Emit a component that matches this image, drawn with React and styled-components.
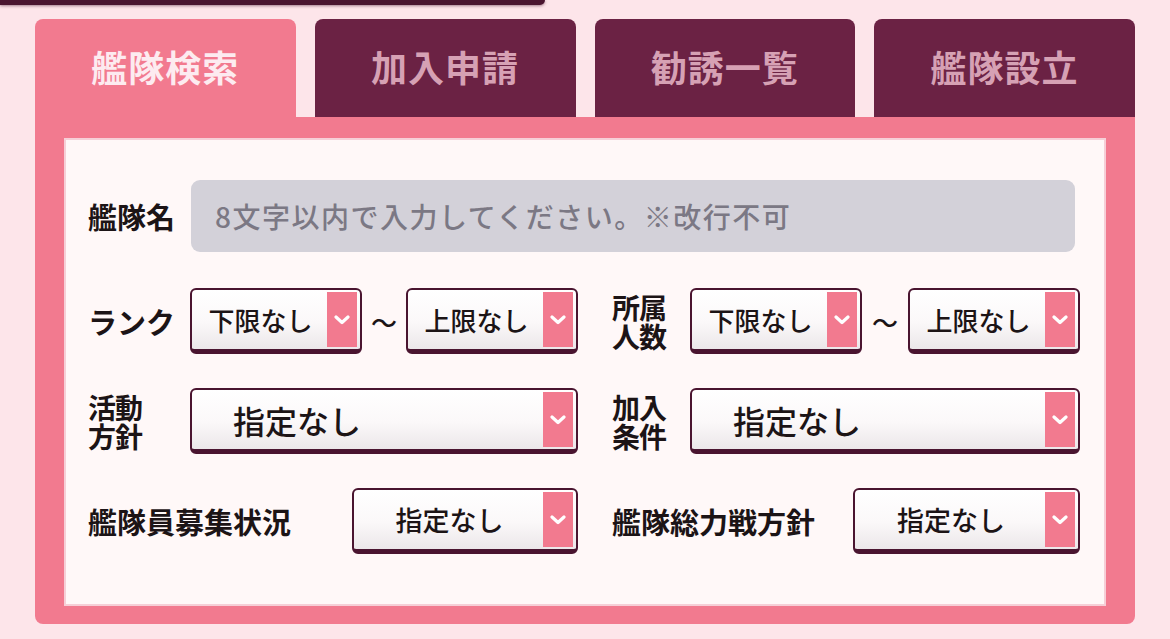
import React from "react";
import styled, { createGlobalStyle } from "styled-components";

const COLOR = {
  BG: "#fde5ea",
  PINK: "#f27a8f",
  MAROON: "#6b2244",
  DARK: "#4a1530",
  TAB_TEXT: "#d6a1b4",
  ACTIVE_TEXT: "#fdebf0",
  INNER: "#fff8f8",
  INPUT: "#d3d1d9",
  PLACEHOLDER: "#7b7884",
  TEXT: "#1c1416",
};

const FONT = `"Noto Sans CJK JP", "Noto Sans", sans-serif`;

const TABS = ["艦隊検索", "加入申請", "勧誘一覧", "艦隊設立"];

const GlobalStyle = createGlobalStyle`
  body {
    margin: 0;
    background-color: ${COLOR.BG};
    font-family: ${FONT};
  }
`;

function Chevron() {
  return (
    <svg width="16" height="10" viewBox="0 0 16 10">
      <path
        d="M2 2 L8 7.5 L14 2"
        fill="none"
        stroke="#fff"
        strokeWidth="3.2"
        strokeLinecap="round"
        strokeLinejoin="round"
      />
    </svg>
  );
}

function Select({ value, width, size, align }) {
  return (
    <SelectBox width={width}>
      <SelectText size={size} align={align}>
        {value}
      </SelectText>
      <SelectArrow>
        <Chevron />
      </SelectArrow>
    </SelectBox>
  );
}

function RangeSelect() {
  return (
    <RangeGroup>
      <Select value="下限なし" width={172} size={26} />
      <Tilde>～</Tilde>
      <Select value="上限なし" width={172} size={26} />
    </RangeGroup>
  );
}

function StackLabel({ width, top, bottom }) {
  return (
    <StackWrap width={width}>
      <StackLine>{top}</StackLine>
      <StackLine>{bottom}</StackLine>
    </StackWrap>
  );
}

export default function App() {
  return (
    <>
      <GlobalStyle />
      <TopBar />
      <Page>
        <TabRow>
          {TABS.map((tab, index) => (
            <Tab key={tab} active={index === 0}>
              {tab}
            </Tab>
          ))}
        </TabRow>
        <Panel>
          <Inner>
            <NameRow>
              <Label>艦隊名</Label>
              <NameInput placeholder="8文字以内で入力してください。※改行不可" />
            </NameRow>
            <Grid>
              <Field>
                <Label width={102}>ランク</Label>
                <RangeSelect />
              </Field>
              <Field>
                <StackLabel width={78} top="所属" bottom="人数" />
                <RangeSelect />
              </Field>

              <Field>
                <StackLabel width={102} top="活動" bottom="方針" />
                <Select value="指定なし" size={32} align="left" />
              </Field>
              <Field>
                <StackLabel width={78} top="加入" bottom="条件" />
                <Select value="指定なし" size={32} align="left" />
              </Field>

              <Field>
                <Label>艦隊員募集状況</Label>
                <Spacer />
                <Select value="指定なし" width={226} size={27} />
              </Field>
              <Field>
                <Label>艦隊総力戦方針</Label>
                <Spacer />
                <Select value="指定なし" width={227} size={27} />
              </Field>
            </Grid>
          </Inner>
        </Panel>
      </Page>
    </>
  );
}

const TopBar = styled.div`
  width: 545px;
  height: 5px;
  background-color: ${COLOR.DARK};
  border-bottom-right-radius: 6px;
  box-shadow: 0 1px 3px rgba(74, 21, 48, 0.5);
`;

const Page = styled.div`
  width: 1100px;
  margin: 14px 0 0 35px;
`;

const TabRow = styled.div`
  display: flex;
  gap: 19px;
`;

const Tab = styled.div`
  flex: 1;
  height: 98px;
  display: flex;
  justify-content: center;
  align-items: center;
  padding-bottom: 4px;
  box-sizing: border-box;
  border-radius: 8px 8px 0 0;
  font-size: 36px;
  font-weight: 700;
  letter-spacing: 1px;
  color: ${(props) => (props.active ? COLOR.ACTIVE_TEXT : COLOR.TAB_TEXT)};
  background-color: ${(props) => (props.active ? COLOR.PINK : COLOR.MAROON)};
`;

const Panel = styled.div`
  padding: 23px 31px 20px 31px;
  background-color: ${COLOR.PINK};
  border-radius: 0 0 8px 8px;
`;

const Inner = styled.div`
  display: flex;
  flex-direction: column;
  gap: 36px;
  padding: 40px 24px 50px 22px;
  background-color: ${COLOR.INNER};
  box-shadow: 0 0 0 2px #f6cfd7;
`;

const NameRow = styled.div`
  display: flex;
  align-items: center;
  gap: 16px;
  padding-right: 5px;
`;

const Label = styled.div`
  flex-shrink: 0;
  width: ${(props) => (props.width ? `${props.width}px` : "auto")};
  font-size: 29px;
  font-weight: 700;
  color: ${COLOR.TEXT};
  white-space: nowrap;
`;

const StackWrap = styled.div`
  flex-shrink: 0;
  width: ${(props) => props.width}px;
  display: flex;
  flex-direction: column;
  gap: 1px;
`;

const StackLine = styled.div`
  height: 28px;
  font-size: 28px;
  line-height: 28px;
  font-weight: 700;
  letter-spacing: -1px;
  color: ${COLOR.TEXT};
  white-space: nowrap;
`;

const NameInput = styled.input`
  flex: 1;
  height: 72px;
  box-sizing: border-box;
  padding: 0 24px;
  border: none;
  border-radius: 9px;
  background-color: ${COLOR.INPUT};
  font-family: ${FONT};
  font-size: 28px;
  font-weight: 500;
  letter-spacing: 1.5px;
  outline: none;

  &::placeholder {
    color: ${COLOR.PLACEHOLDER};
  }
`;

const Grid = styled.div`
  display: grid;
  grid-template-columns: 490px 468px;
  column-gap: 34px;
  row-gap: 34px;
`;

const Field = styled.div`
  display: flex;
  align-items: center;
`;

const Spacer = styled.div`
  flex: 1;
`;

const RangeGroup = styled.div`
  flex: 1;
  display: flex;
  align-items: center;
`;

const Tilde = styled.div`
  flex: 1;
  text-align: center;
  font-size: 26px;
  font-weight: 500;
  color: ${COLOR.TEXT};
`;

const SelectBox = styled.div`
  flex: ${(props) => (props.width ? "none" : "1")};
  width: ${(props) => (props.width ? `${props.width}px` : "auto")};
  height: 66px;
  box-sizing: border-box;
  display: flex;
  padding: 2px 3px 2px 2px;
  border: 2px solid ${COLOR.DARK};
  border-bottom-width: 5px;
  border-radius: 6px;
  background: linear-gradient(#ffffff 0%, #fbf8f9 55%, #ebe7e9 100%);
`;

const SelectText = styled.div`
  flex: 1;
  display: flex;
  align-items: center;
  justify-content: ${(props) => (props.align === "left" ? "flex-start" : "center")};
  padding-left: ${(props) => (props.align === "left" ? "39px" : "0")};
  font-size: ${(props) => props.size}px;
  font-weight: 500;
  color: ${COLOR.TEXT};
  white-space: nowrap;
`;

const SelectArrow = styled.div`
  width: 30px;
  display: flex;
  justify-content: center;
  align-items: center;
  background-color: ${COLOR.PINK};
`;
